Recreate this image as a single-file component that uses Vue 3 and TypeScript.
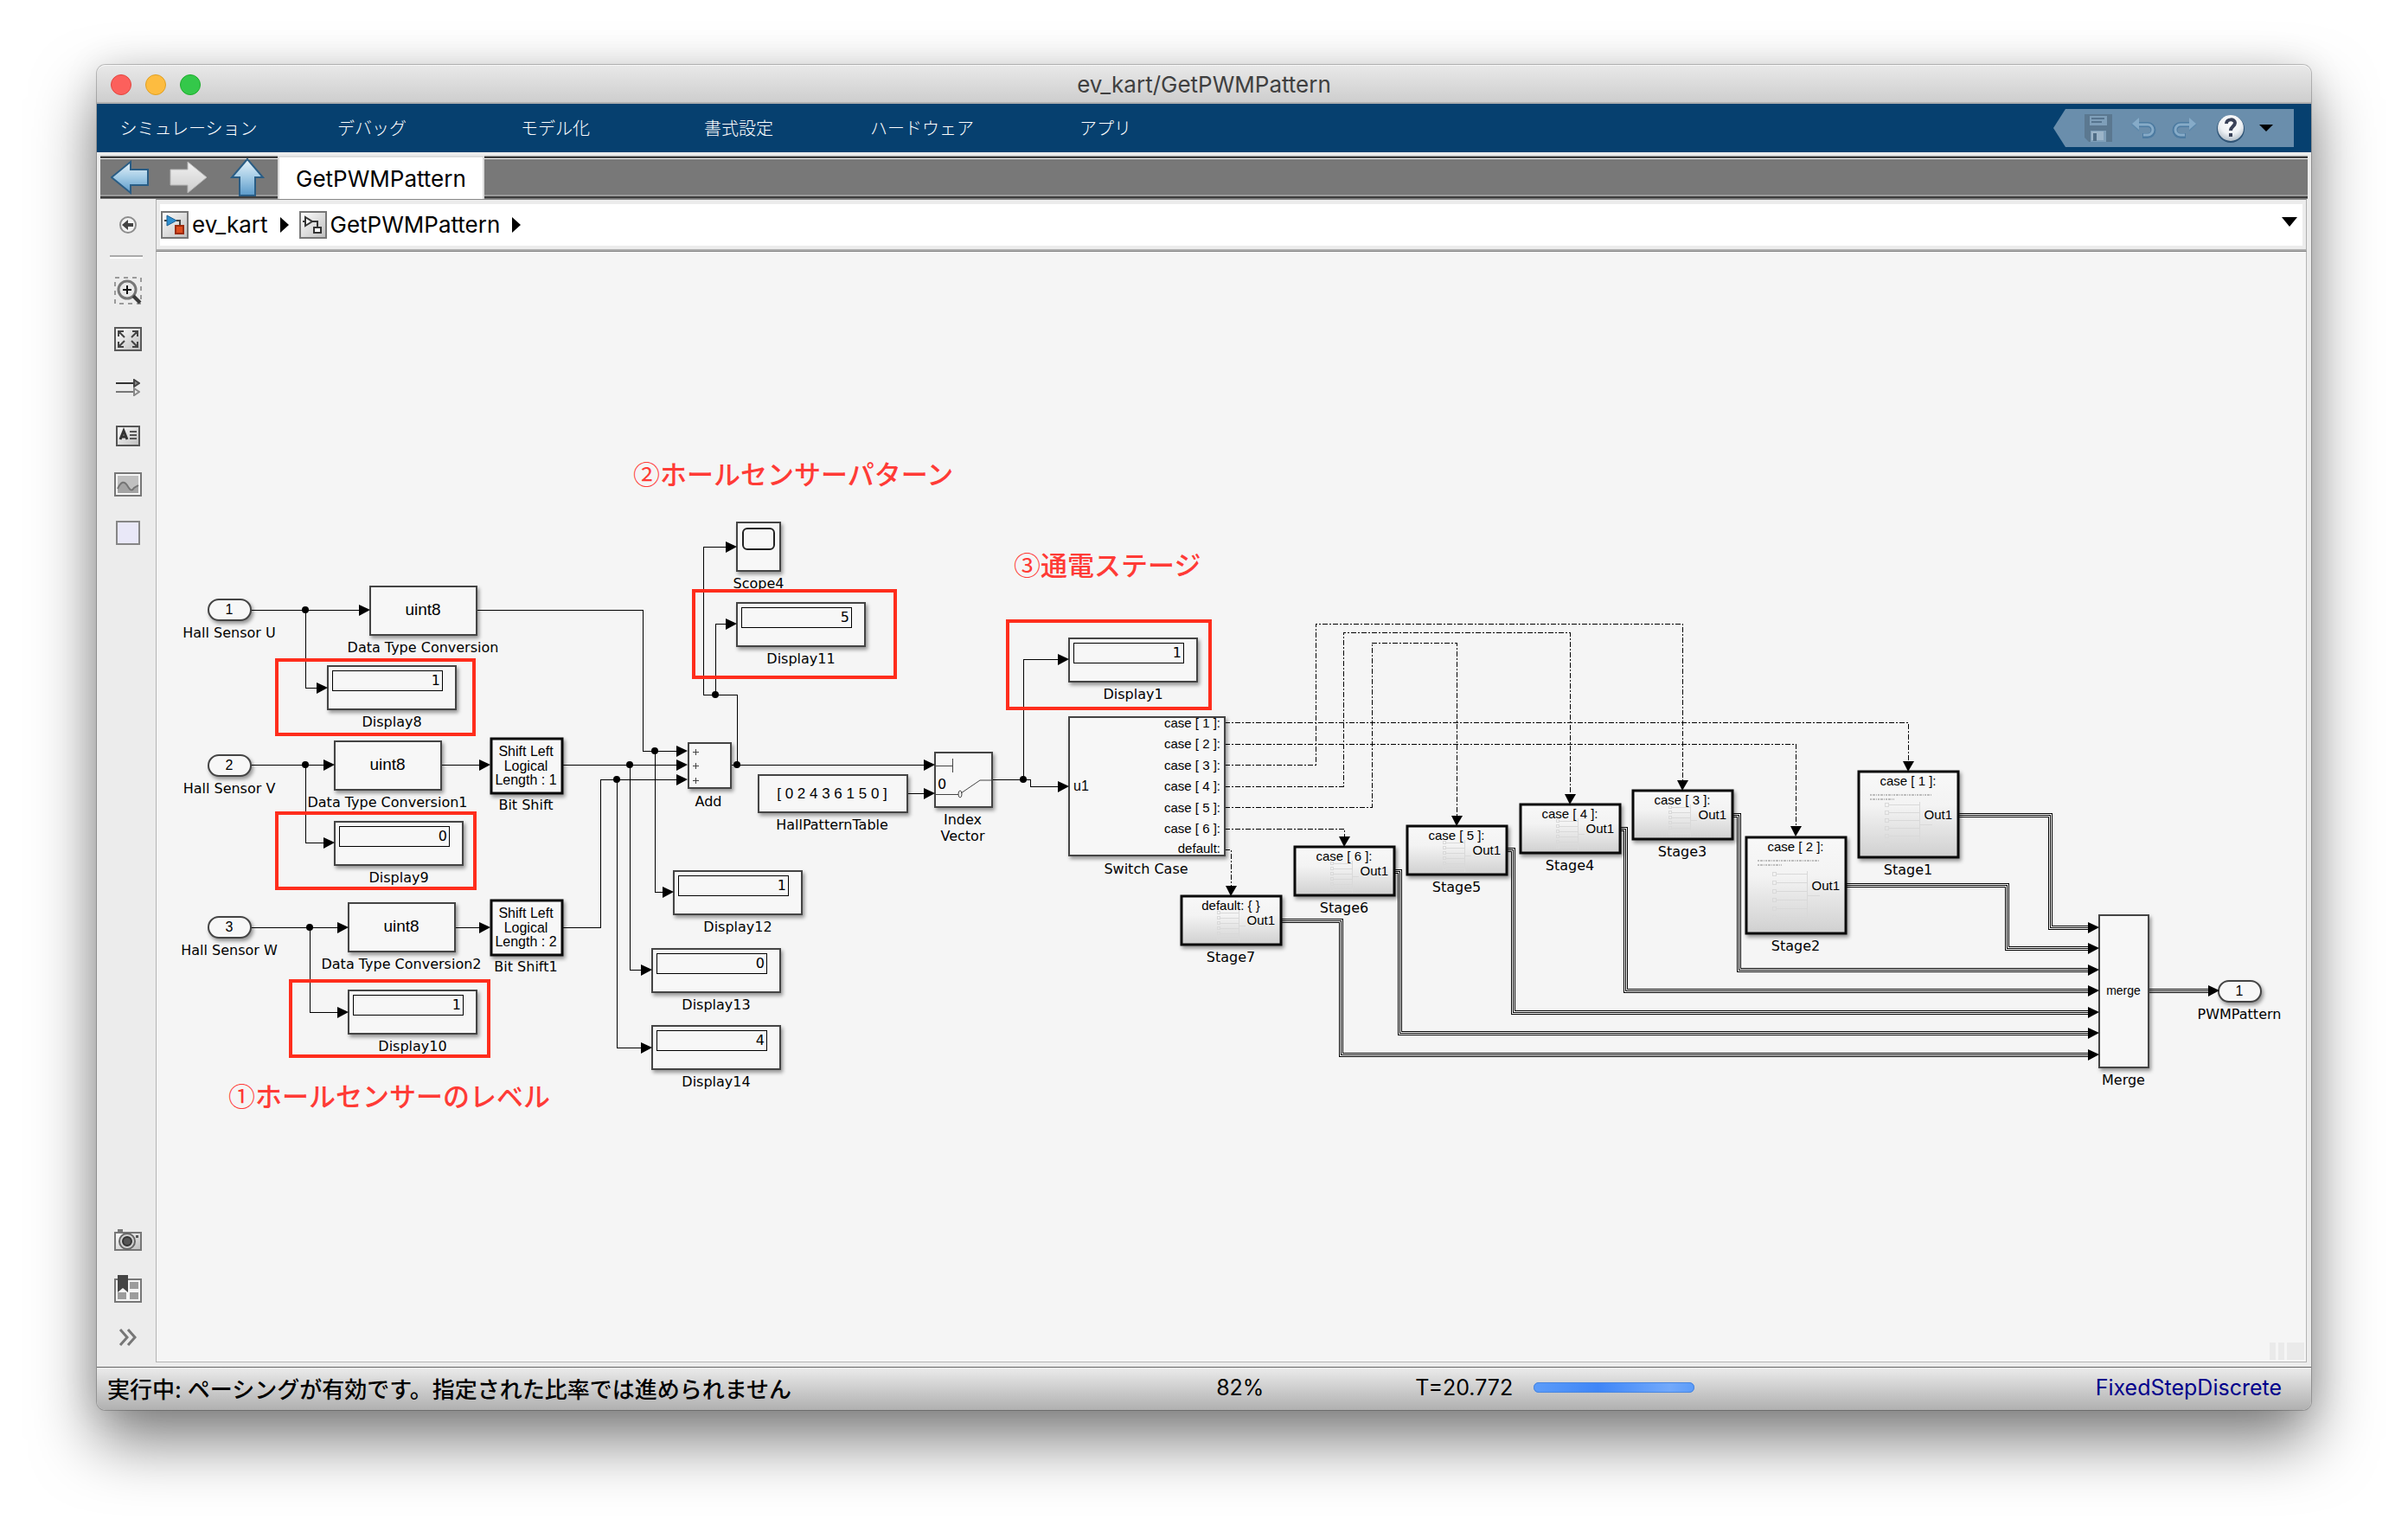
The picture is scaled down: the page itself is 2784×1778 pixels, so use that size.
<script setup lang="ts">
type Point = [number, number]

interface Wire {
  points: Point[]
  head?: 'right' | 'down'
}

interface Display {
  name: string
  value: string
  x: number
  y: number
}

interface Stage {
  name: string
  action: string
  x: number
  y: number
  height: number
  detailed: boolean
}

const menus: string[] = ['シミュレーション', 'デバッグ', 'モデル化', '書式設定', 'ハードウェア', 'アプリ']

const HEAD = 12

const signals: Wire[] = [
  { points: [[290, 705], [428, 705]], head: 'right' },
  { points: [[353, 705], [353, 795], [379, 795]], head: 'right' },
  { points: [[551, 705], [743, 705], [743, 868], [795, 868]], head: 'right' },
  { points: [[290, 884], [387, 884]], head: 'right' },
  { points: [[353, 884], [353, 974], [387, 974]], head: 'right' },
  { points: [[510, 884], [567, 884]], head: 'right' },
  { points: [[650, 884], [795, 884]], head: 'right' },
  { points: [[290, 1072], [403, 1072]], head: 'right' },
  { points: [[358, 1072], [358, 1170], [403, 1170]], head: 'right' },
  { points: [[527, 1072], [567, 1072]], head: 'right' },
  { points: [[650, 1072], [694, 1072], [694, 901], [795, 901]], head: 'right' },
  { points: [[757, 868], [757, 1031], [779, 1031]], head: 'right' },
  { points: [[728, 884], [728, 1121], [754, 1121]], head: 'right' },
  { points: [[713, 901], [713, 1211], [754, 1211]], head: 'right' },
  { points: [[845, 884], [1081, 884]], head: 'right' },
  { points: [[852, 884], [852, 803], [813, 803], [813, 632], [852, 632]], head: 'right' },
  { points: [[827, 803], [827, 721], [852, 721]], head: 'right' },
  { points: [[1049, 917], [1081, 917]], head: 'right' },
  { points: [[1147, 901], [1191, 901], [1191, 909], [1236, 909]], head: 'right' },
  { points: [[1183, 901], [1183, 762], [1236, 762]], head: 'right' },
]

const actions: Wire[] = [
  { points: [[1416, 835], [2206, 835], [2206, 892]], head: 'down' },
  { points: [[1416, 860], [2076, 860], [2076, 967]], head: 'down' },
  { points: [[1416, 884], [1521, 884], [1521, 721], [1945, 721], [1945, 914]], head: 'down' },
  { points: [[1416, 909], [1553, 909], [1553, 731], [1815, 731], [1815, 930]], head: 'down' },
  { points: [[1416, 933], [1586, 933], [1586, 743], [1684, 743], [1684, 955]], head: 'down' },
  { points: [[1416, 958], [1554, 958], [1554, 979]], head: 'down' },
  { points: [[1416, 982], [1423, 982], [1423, 1036]], head: 'down' },
]

const buses: Wire[] = [
  { points: [[2265, 942], [2370, 942], [2370, 1072], [2427, 1072]], head: 'right' },
  { points: [[2134, 1023], [2320, 1023], [2320, 1096], [2427, 1096]], head: 'right' },
  { points: [[2003, 942], [2010, 942], [2010, 1121], [2427, 1121]], head: 'right' },
  { points: [[1873, 958], [1879, 958], [1879, 1145], [2427, 1145]], head: 'right' },
  { points: [[1743, 982], [1749, 982], [1749, 1170], [2427, 1170]], head: 'right' },
  { points: [[1612, 1007], [1618, 1007], [1618, 1194], [2427, 1194]], head: 'right' },
  { points: [[1481, 1064], [1550, 1064], [1550, 1219], [2427, 1219]], head: 'right' },
  { points: [[2484, 1145], [2566, 1145]], head: 'right' },
]

const junctions: Point[] = [
  [353, 705], [353, 884], [358, 1072], [757, 868], [728, 884], [713, 901],
  [852, 884], [827, 803], [1183, 901],
]

const ports = [
  { name: 'Hall Sensor U', index: 1, x: 241, y: 705 },
  { name: 'Hall Sensor V', index: 2, x: 241, y: 885 },
  { name: 'Hall Sensor W', index: 3, x: 241, y: 1072 },
  { name: 'PWMPattern', index: 1, x: 2565, y: 1146 },
]

const conversions = [
  { name: 'Data Type Conversion', x: 428, y: 678 },
  { name: 'Data Type Conversion1', x: 387, y: 857 },
  { name: 'Data Type Conversion2', x: 403, y: 1044 },
]

const shifts = [
  { name: 'Bit Shift', length: 1, y: 854 },
  { name: 'Bit Shift1', length: 2, y: 1041 },
]

const displays: Display[] = [
  { name: 'Display8', value: '1', x: 379, y: 770 },
  { name: 'Display9', value: '0', x: 387, y: 950 },
  { name: 'Display10', value: '1', x: 403, y: 1145 },
  { name: 'Display11', value: '5', x: 852, y: 697 },
  { name: 'Display12', value: '1', x: 779, y: 1007 },
  { name: 'Display13', value: '0', x: 754, y: 1097 },
  { name: 'Display14', value: '4', x: 754, y: 1186 },
  { name: 'Display1', value: '1', x: 1236, y: 738 },
]

const cases = [
  { text: 'case [ 1 ]:', y: 841 },
  { text: 'case [ 2 ]:', y: 865 },
  { text: 'case [ 3 ]:', y: 890 },
  { text: 'case [ 4 ]:', y: 914 },
  { text: 'case [ 5 ]:', y: 939 },
  { text: 'case [ 6 ]:', y: 963 },
  { text: 'default:', y: 986 },
]

const stages: Stage[] = [
  { name: 'Stage1', action: 'case [ 1 ]:', x: 2149, y: 892, height: 99, detailed: true },
  { name: 'Stage2', action: 'case [ 2 ]:', x: 2019, y: 968, height: 111, detailed: true },
  { name: 'Stage3', action: 'case [ 3 ]:', x: 1888, y: 914, height: 56, detailed: false },
  { name: 'Stage4', action: 'case [ 4 ]:', x: 1758, y: 930, height: 56, detailed: false },
  { name: 'Stage5', action: 'case [ 5 ]:', x: 1627, y: 955, height: 56, detailed: false },
  { name: 'Stage6', action: 'case [ 6 ]:', x: 1497, y: 979, height: 56, detailed: false },
  { name: 'Stage7', action: 'default: { }', x: 1366, y: 1036, height: 56, detailed: false },
]

const highlights = [
  { x: 320, y: 763, width: 228, height: 86 },
  { x: 320, y: 940, width: 229, height: 87 },
  { x: 336, y: 1134, width: 229, height: 87 },
  { x: 802, y: 683, width: 233, height: 100 },
  { x: 1165, y: 718, width: 234, height: 101 },
]

const notes = [
  { mark: '①', text: 'ホールセンサーのレベル', x: 264, y: 1279 },
  { mark: '②', text: 'ホールセンサーパターン', x: 732, y: 560 },
  { mark: '③', text: '通電ステージ', x: 1172, y: 665 },
]

/** Path of a wire; it stops where its arrowhead begins. */
function wirePath(wire: Wire): string {
  const last = wire.points.length - 1
  return wire.points
    .map(([x, y], i) => {
      const px = i === last && wire.head === 'right' ? x - HEAD : x
      const py = i === last && wire.head === 'down' ? y - HEAD : y
      return `${i ? 'L' : 'M'}${px} ${py}`
    })
    .join('')
}

function headPoints(wire: Wire): string {
  const [x, y] = wire.points[wire.points.length - 1]
  return wire.head === 'down'
    ? `${x},${y} ${x - 6},${y - HEAD} ${x + 7},${y - HEAD}`
    : `${x},${y} ${x - HEAD - 1},${y - 6} ${x - HEAD - 1},${y + 7}`
}

const allWires: Wire[] = [...signals, ...actions, ...buses]

/** Faint preview of the subsystem's content, drawn in its own block. */
function previewPath(stage: Stage): string {
  const left = stage.detailed ? 34 : 44
  const right = stage.detailed ? 70 : 66
  const top = stage.detailed ? Math.round(stage.height * 0.38) : 19
  const step = stage.detailed ? Math.round(stage.height * 0.09) : 6
  const box = stage.detailed ? 4 : 3
  let d = ''
  for (let i = 0; i < 6; i++) {
    const y = top + i * step
    d += `M${left - box} ${y - 2}h${box}v${box}h-${box}zM${left} ${y}H${right}`
  }
  const mid = top + step * 2 + Math.round(step / 2)
  return `${d}M${right} ${top - 3}V${top + step * 5 + 4}M${right} ${mid}h${stage.detailed ? 15 : 8}`
}
</script>

<template>
  <div class="desktop">
    <div class="window">
      <header class="titlebar">
        <div class="lights">
          <button class="light close" aria-label="閉じる"></button>
          <button class="light minimize" aria-label="しまう"></button>
          <button class="light zoom" aria-label="拡大"></button>
        </div>
        <h1>ev_kart/GetPWMPattern</h1>
      </header>

      <nav class="menubar">
        <button v-for="menu in menus" :key="menu" class="menu">{{ menu }}</button>
        <div class="quick">
          <button class="save" aria-label="保存">
            <svg width="32" height="32" viewBox="0 0 32 32">
              <path d="M0 0h32v32H5l-5-5z" fill="#5b7890" />
              <path d="M6 2h20v11H6zM7 19h18v13H7z" fill="#7f9fb9" />
              <path d="M8 5h15M8 9h12" stroke="#56748e" stroke-width="2" />
              <path d="M8 20h14v10H8z" fill="#9cb4c8" />
              <path d="M10 22h4v9h-4z" fill="#506d86" />
            </svg>
          </button>
          <button aria-label="元に戻す">
            <svg width="32" height="32" viewBox="0 0 32 32" fill="none">
              <path d="M9 12h12a6 6 0 0 1 0 13h-6" stroke="#4d7ba1" stroke-width="6" />
              <path d="M2 12l9-8v16z" fill="#5c88ab" />
              <path d="M9 12h12a6 6 0 0 1 0 12h-5" stroke="#86abc8" stroke-width="3" />
              <path d="M3 11l8-7v14z" fill="#86abc8" />
            </svg>
          </button>
          <button aria-label="やり直し">
            <svg width="32" height="32" viewBox="0 0 32 32" fill="none">
              <path d="M23 12H11a6 6 0 0 0 0 13h6" stroke="#4d7ba1" stroke-width="6" />
              <path d="M30 12l-9-8v16z" fill="#5c88ab" />
              <path d="M23 12H11a6 6 0 0 0 0 12h5" stroke="#86abc8" stroke-width="3" />
              <path d="M29 11l-8-7v14z" fill="#86abc8" />
            </svg>
          </button>
          <button class="help" aria-label="ヘルプ">
            <svg width="34" height="34" viewBox="0 0 34 34" fill="none">
              <defs>
                <radialGradient id="helpFill" cx=".5" cy=".3" r=".7">
                  <stop offset="0" stop-color="#fff" />
                  <stop offset=".6" stop-color="#eef1f4" />
                  <stop offset="1" stop-color="#b4bfc9" />
                </radialGradient>
              </defs>
              <circle cx="17" cy="18" r="16" fill="#2f5476" />
              <circle cx="17" cy="17" r="15" fill="url(#helpFill)" />
              <path d="M12 12c0-6 10-6 10-1 0 4-5 4-5 9" stroke="#3a4258" stroke-width="4" />
              <path d="M15 23h4v4h-4z" fill="#3a4258" />
            </svg>
          </button>
          <button class="more" aria-label="その他">
            <svg width="16" height="8" viewBox="0 0 16 8"><path d="M0 0h16L8 8z" /></svg>
          </button>
        </div>
      </nav>

      <div class="tabstrip">
        <svg width="0" height="0" class="defs">
          <defs>
            <linearGradient id="arrowBlue" x1="0" y1="0" x2="0" y2="1">
              <stop offset="0" stop-color="#e9f4fb" />
              <stop offset=".5" stop-color="#a3cbe5" />
              <stop offset="1" stop-color="#5b9aca" />
            </linearGradient>
            <linearGradient id="arrowGray" x1="0" y1="0" x2="0" y2="1">
              <stop offset="0" stop-color="#f2f2f2" />
              <stop offset="1" stop-color="#cdcdcd" />
            </linearGradient>
            <linearGradient id="iconFill" x1="0" y1="0" x2="1" y2="1">
              <stop offset="0" stop-color="#fff" />
              <stop offset="1" stop-color="#bdbdbd" />
            </linearGradient>
          </defs>
        </svg>
        <button class="travel" aria-label="戻る">
          <svg width="44" height="44" viewBox="0 0 44 44">
            <path d="M1 22L23 4v9h20v18H23v9z" fill="url(#arrowBlue)" stroke="#2a5d85" stroke-width="2" />
          </svg>
        </button>
        <button class="travel" aria-label="進む">
          <svg width="44" height="44" viewBox="0 0 44 44">
            <path d="M43 22L21 4v9H1v18h20v9z" fill="url(#arrowGray)" stroke="#b5b5b5" />
          </svg>
        </button>
        <button class="travel" aria-label="上の階層">
          <svg width="44" height="44" viewBox="0 0 44 44">
            <path d="M22 1L4 22h9v21h18V22h9z" fill="url(#arrowBlue)" stroke="#2a5d85" stroke-width="2" />
          </svg>
        </button>
        <button class="tab">GetPWMPattern</button>
      </div>

      <div class="workspace">
        <aside class="palette">
          <div class="tools">
            <button class="tool" aria-label="パレットを隠す">
              <svg width="22" height="22" viewBox="0 0 22 22" fill="none">
                <circle cx="11" cy="11" r="9" fill="#f4f4f4" stroke="#8c8c8c" stroke-width="2" />
                <path d="M4 11l7-6v4h6v4h-6v4z" fill="#444" />
              </svg>
            </button>
            <hr />
            <button class="tool" aria-label="ズーム">
              <svg width="32" height="32" viewBox="0 0 32 32" fill="none">
                <path d="M1 1h30v30H1z" stroke="#9a9a9a" stroke-width="2" stroke-dasharray="5 5" />
                <circle cx="15" cy="15" r="10" fill="#e8e8e8" stroke="#777" stroke-width="3" />
                <path d="M15 10v10M10 15h10" stroke="#111" stroke-width="2" />
                <path d="M22 22l8 8" stroke="#3a3a3a" stroke-width="4" />
              </svg>
            </button>
            <button class="tool" aria-label="全体表示">
              <svg width="32" height="28" viewBox="0 0 32 28" fill="none">
                <path d="M1 1h30v26H1z" fill="url(#iconFill)" stroke="#5a5a5a" stroke-width="2" />
                <path d="M5 11V5h6M5 5l7 7M27 11V5h-6M27 5l-7 7M5 17v6h6M5 23l7-7M27 17v6h-6M27 23l-7-7" stroke="#444" stroke-width="2" />
              </svg>
            </button>
            <button class="tool" aria-label="サンプル時間">
              <svg width="28" height="20" viewBox="0 0 28 20" fill="none">
                <path d="M0 5h21" stroke="#333" stroke-width="2" />
                <path d="M21 1l6 4-6 4z" fill="#888" stroke="#444" stroke-width="2" />
                <path d="M0 15h21" stroke="#777" stroke-width="2" />
                <path d="M21 11l6 4-6 4z" fill="#eee" stroke="#888" stroke-width="2" />
              </svg>
            </button>
            <button class="tool" aria-label="注釈">
              <svg width="28" height="24" viewBox="0 0 28 24" fill="none">
                <path d="M1 1h26v22H1z" fill="url(#iconFill)" stroke="#555" stroke-width="2" />
                <path d="M5 16l4-10 4 10M6 13h6" stroke="#333" stroke-width="3" />
                <path d="M16 7h8M16 11h8M16 15h8" stroke="#555" stroke-width="2" />
              </svg>
            </button>
            <button class="tool" aria-label="イメージ">
              <svg width="32" height="28" viewBox="0 0 32 28" fill="none">
                <path d="M1 1h30v26H1z" fill="#f6f6f6" stroke="#777" stroke-width="2" />
                <path d="M4 4h24v20H4z" fill="#c0c0c0" />
                <path d="M4 24v-5c4-9 8-9 11-4s5 8 8 3l5-3v9z" fill="#a4a4a4" />
                <path d="M4 19c4-9 8-9 11-4s5 8 8 3l5-3" stroke="#747474" stroke-width="2" />
              </svg>
            </button>
            <button class="tool" aria-label="領域">
              <svg width="28" height="28" viewBox="0 0 28 28">
                <path d="M1 1h26v26H1z" fill="#e9e8f8" stroke="#868686" stroke-width="2" />
              </svg>
            </button>
          </div>
          <div class="tools">
            <button class="tool" aria-label="スクリーンショット">
              <svg width="32" height="26" viewBox="0 0 32 26" fill="none">
                <path d="M4 0h6v4H4z" fill="#777" />
                <path d="M1 4h30v20H1z" fill="url(#iconFill)" stroke="#777" stroke-width="2" />
                <circle cx="15" cy="14" r="9" fill="#d0d0d0" stroke="#666" stroke-width="2" />
                <circle cx="15" cy="14" r="5" fill="#555" stroke="#333" stroke-width="2" />
                <path d="M25 7h3v3h-3z" fill="#555" />
              </svg>
            </button>
            <button class="tool" aria-label="モデルブラウザー">
              <svg width="32" height="32" viewBox="0 0 32 32" fill="none">
                <path d="M1 5h30v26H1z" fill="#f4f4f4" stroke="#777" stroke-width="2" />
                <path d="M18 8h10v8H18zM18 20h10v8H18zM4 20h10v8H4z" fill="#9c9c9c" />
                <path d="M4 0h12v20l-6-5-6 5z" fill="#444" />
              </svg>
            </button>
            <button class="tool" aria-label="展開">
              <svg width="22" height="20" viewBox="0 0 22 20" fill="none">
                <path d="M2 1l8 9-8 9M11 1l8 9-8 9" stroke="#777" stroke-width="3" />
              </svg>
            </button>
          </div>
        </aside>

        <main>
          <nav class="path">
            <button class="crumb">
              <svg width="32" height="32" viewBox="0 0 32 32" fill="none">
                <path d="M1 1h30v30H1z" fill="url(#iconFill)" stroke="#777" stroke-width="2" />
                <path d="M4 11h3M18 11h4v6" stroke="#444" stroke-width="2" />
                <path d="M7 5l11 6-11 6z" fill="#2e8fcf" stroke="#1c5f91" />
                <path d="M17 17h9v9h-9z" fill="#dd4d1f" stroke="#9c2c0c" stroke-width="2" />
              </svg>
              ev_kart
            </button>
            <svg class="next" width="10" height="18" viewBox="0 0 10 18"><path d="M0 0l10 9-10 9z" /></svg>
            <button class="crumb">
              <svg width="32" height="32" viewBox="0 0 32 32" fill="none">
                <path d="M1 1h30v30H1z" fill="url(#iconFill)" stroke="#777" stroke-width="2" />
                <path d="M4 12h3M15 12h6v6" stroke="#333" stroke-width="2" />
                <path d="M7 7l8 5-8 5z" fill="#fff" stroke="#333" stroke-width="2" />
                <path d="M17 19h8v6h-8z" fill="#fff" stroke="#333" stroke-width="2" />
              </svg>
              GetPWMPattern
            </button>
            <svg class="next" width="10" height="18" viewBox="0 0 10 18"><path d="M0 0l10 9-10 9z" /></svg>
            <button class="history" aria-label="履歴">
              <svg width="18" height="11" viewBox="0 0 18 11"><path d="M0 0h18L9 11z" /></svg>
            </button>
          </nav>

          <div class="canvas">
            <svg class="model" viewBox="181 291 2485 1283">
              <defs>
                <linearGradient id="stageFill" x1="0" y1="0" x2="0" y2="1">
                  <stop offset="0" stop-color="#f8f8f8" />
                  <stop offset=".4" stop-color="#f3f3f3" />
                  <stop offset="1" stop-color="#d0d0d0" />
                </linearGradient>
              </defs>

              <g class="wires">
                <path v-for="(wire, i) in signals" :key="`s${i}`" :d="wirePath(wire)" class="signal" />
                <path v-for="(wire, i) in actions" :key="`a${i}`" :d="wirePath(wire)" class="signal action" />
                <g v-for="(wire, i) in buses" :key="`b${i}`">
                  <path :d="wirePath(wire)" class="bus-outer" />
                  <path :d="wirePath(wire)" class="bus-gap" />
                  <path :d="wirePath(wire)" class="signal" />
                </g>
              </g>
              <circle v-for="([x, y], i) in junctions" :key="`j${i}`" :cx="x" :cy="y" r="4" />

              <g v-for="port in ports" :key="port.name">
                <rect class="block" :x="port.x" :y="port.y - 12" width="49" height="24" rx="12" />
                <text class="inner" :x="port.x + 24" :y="port.y + 5">{{ port.index }}</text>
                <text class="label" :x="port.x + 24" :y="port.y + 32">{{ port.name }}</text>
              </g>

              <g v-for="block in conversions" :key="block.name">
                <rect class="block" :x="block.x" :y="block.y" width="123" height="56" />
                <text class="inner large" :x="block.x + 61" :y="block.y + 33">uint8</text>
                <text class="label" :x="block.x + 61" :y="block.y + 76">{{ block.name }}</text>
              </g>

              <g v-for="shift in shifts" :key="shift.name">
                <rect class="block thick" x="568" :y="shift.y" width="82" height="63" />
                <text class="inner" x="608" :y="shift.y + 20">Shift Left</text>
                <text class="inner" x="608" :y="shift.y + 37">Logical</text>
                <text class="inner" x="608" :y="shift.y + 53">Length : {{ shift.length }}</text>
                <text class="label" x="608" :y="shift.y + 82">{{ shift.name }}</text>
              </g>

              <g v-for="display in displays" :key="display.name">
                <rect class="block" :x="display.x" :y="display.y" width="148" height="50" />
                <rect class="field" :x="display.x + 5" :y="display.y + 5" width="127" height="23" />
                <text class="label end" :x="display.x + 130" :y="display.y + 22">{{ display.value }}</text>
                <text class="label" :x="display.x + 74" :y="display.y + 70">{{ display.name }}</text>
              </g>

              <g>
                <rect class="block" x="852" y="604" width="50" height="56" />
                <rect class="screen" x="859" y="611" width="36" height="24" rx="5" />
                <text class="label" x="877" y="680">Scope4</text>
              </g>

              <g>
                <rect class="block" x="796" y="859" width="49" height="52" />
                <path class="sketch" d="M801 869h7M804 866v7M801 885h7M804 882v7M801 902h7M804 899v7" />
                <text class="label" x="819" y="932">Add</text>
              </g>

              <g>
                <rect class="block" x="877" y="896" width="172" height="43" />
                <text class="inner table" x="962" y="923">[ 0 2 4 3 6 1 5 0 ]</text>
                <text class="label" x="962" y="959">HallPatternTable</text>
              </g>

              <g>
                <rect class="block" x="1081" y="870" width="66" height="63" />
                <path class="sketch" d="M1082 885h19M1101 877v16M1082 918h26" />
                <path class="sketch smooth" d="M1111 917l22-15h13" />
                <ellipse class="sketch smooth" cx="1110" cy="918" rx="2" ry="4" />
                <text class="label" x="1089" y="912">0</text>
                <text class="label" x="1113" y="953">Index</text>
                <text class="label" x="1113" y="972">Vector</text>
              </g>

              <g>
                <rect class="block" x="1236" y="829" width="180" height="160" />
                <text class="inner start" x="1241" y="914">u1</text>
                <text v-for="item in cases" :key="item.text" class="inner small end" x="1411" :y="item.y">{{ item.text }}</text>
                <text class="label" x="1325" y="1010">Switch Case</text>
              </g>

              <g v-for="stage in stages" :key="stage.name">
                <rect class="block thick stage" :x="stage.x" :y="stage.y" width="115" :height="stage.height" />
                <path class="preview" :transform="`translate(${stage.x} ${stage.y})`" :d="previewPath(stage)" />
                <g v-if="stage.detailed" class="remark" :transform="`translate(${stage.x} ${stage.y})`">
                  <path d="M13 27h71" />
                  <path d="M13 32h28" />
                </g>
                <text class="inner small" :x="stage.x + 57" :y="stage.y + 16">{{ stage.action }}</text>
                <text class="inner small end" :x="stage.x + 108" :y="stage.y + Math.round(stage.height / 2) + 5">Out1</text>
                <text class="label" :x="stage.x + 57" :y="stage.y + stage.height + 20">{{ stage.name }}</text>
              </g>

              <g>
                <rect class="block" x="2427" y="1058" width="57" height="176" />
                <text class="inner tiny" x="2455" y="1150">merge</text>
                <text class="label" x="2455" y="1254">Merge</text>
              </g>

              <polygon v-for="(wire, i) in allWires" :key="`h${i}`" :points="headPoints(wire)" />

              <rect v-for="(box, i) in highlights" :key="`m${i}`" class="highlight" v-bind="box" />
              <text v-for="note in notes" :key="note.mark" class="note" :x="note.x" :y="note.y"><tspan class="mark">{{ note.mark }}</tspan>{{ note.text }}</text>

              <path class="corner" d="M2624 1552h7v20h-7zM2634 1552h7v20h-7zM2644 1552h20v20h-20z" />
            </svg>
          </div>
        </main>
      </div>

      <footer class="status">
        <span class="message">実行中: ペーシングが有効です。指定された比率では進められません</span>
        <span>82%</span>
        <label class="time">T=20.772<progress value="1" max="1"></progress></label>
        <a class="solver" href="#">FixedStepDiscrete</a>
      </footer>
    </div>
  </div>
</template>

<style>
body {
  margin: 0;
  background: #fff;
}
</style>

<style scoped>
.desktop {
  padding: 75px 112px 148px;
  overflow: hidden;
  font-family: Inter, "Noto Sans CJK JP", sans-serif;
  font-size: 26px;
  color: #000;
}

button {
  display: flex;
  align-items: center;
  justify-content: center;
  padding: 0;
  border: 0;
  background: none;
  color: inherit;
  font: inherit;
}

svg {
  display: block;
  flex: none;
}

.window {
  background: #ececec;
  border-radius: 10px;
  box-shadow: 0 0 0 1px rgba(0, 0, 0, 0.22), 0 36px 72px rgba(0, 0, 0, 0.5), 0 0 40px rgba(0, 0, 0, 0.1);
}

.titlebar {
  display: grid;
  grid-template-columns: 1fr auto 1fr;
  align-items: center;
  height: 45px;
  box-sizing: border-box;
  padding: 2px 16px 0;
  border-top: 1px solid #f6f6f6;
  border-bottom: 2px solid #b0b0b0;
  border-radius: 10px 10px 0 0;
  background: linear-gradient(#e8e8e8, #cecece);
}

.lights {
  display: flex;
  gap: 16px;
}

.light {
  width: 24px;
  height: 24px;
  box-sizing: border-box;
  border: 1px solid #e2463f;
  border-radius: 50%;
  background: #fc605c;
}

.minimize {
  border-color: #dfa023;
  background: #fdbc40;
}

.zoom {
  border-color: #1dad2b;
  background: #34c84a;
}

h1 {
  margin: 0;
  color: #404040;
  font-size: 26px;
  font-weight: 400;
  line-height: 32px;
}

.menubar {
  display: flex;
  align-items: center;
  height: 56px;
  padding-right: 20px;
  background: #06406f;
}

.menu {
  width: 212px;
  height: 56px;
  padding-bottom: 2px;
  color: #fff;
  font-family: "Noto Sans CJK JP", sans-serif;
  font-size: 20px;
  font-weight: 300;
}

.quick {
  display: flex;
  align-items: center;
  gap: 16px;
  height: 44px;
  margin-left: auto;
  padding: 0 24px 0 36px;
  background: #6a8eac;
  clip-path: polygon(0 50%, 14px 0, 100% 0, 100% 100%, 14px 100%);
}

.save {
  margin-right: 4px;
}

.help {
  margin-left: 4px;
}

.tabstrip {
  display: flex;
  height: 50px;
  box-sizing: border-box;
  margin: 4px 4px 0;
  padding-left: 12px;
  background: linear-gradient(#999 0 1px, #3c3c3c 1px 3px, #fff 3px 4px, #787878 4px 45px, #999 45px 47px, #3c3c3c 47px 49px, #787878 49px);
}

.defs {
  position: absolute;
}

.travel {
  margin-right: 24px;
}

.travel:nth-of-type(3) {
  margin-right: 13px;
}

.tab {
  box-sizing: border-box;
  padding: 0 19px;
  border: 2px solid #dcdcdc;
  border-bottom: 0;
  background: #fff;
}

.workspace {
  display: flex;
  padding-right: 5px;
}

.palette {
  display: flex;
  flex-direction: column;
  justify-content: space-between;
  width: 68px;
  flex: none;
  padding: 2px 0 6px;
  box-sizing: border-box;
}

.tools {
  display: flex;
  flex-direction: column;
}

.tool {
  width: 72px;
  height: 56px;
}

hr {
  width: 38px;
  height: 2px;
  margin: 7px 0 9px 15px;
  border: 0;
  border-bottom: 2px solid #fff;
  background: #aaa;
}

main {
  flex: 1;
  min-width: 0;
}

.path {
  display: flex;
  align-items: center;
  height: 60px;
  box-sizing: border-box;
  padding: 0 6px 0 1px;
  border: 1px solid #b0b0b0;
  border-top-color: #888;
  border-bottom-width: 2px;
  background: linear-gradient(#fff, #fff) 4px 5px / calc(100% - 8px) 48px no-repeat #ececec;
}

.crumb {
  gap: 4px;
  margin-left: 4px;
}

.next {
  margin: 0 8px 0 14px;
}

.history {
  margin: 0 4px 6px auto;
}

.canvas {
  border: 1px solid #b4b4b4;
  border-top-color: #808080;
  margin-bottom: 5px;
  background: #f5f5f5;
}

.model {
  width: 100%;
  height: auto;
}

.wires path {
  fill: none;
  shape-rendering: crispEdges;
}

.signal {
  stroke: #000;
}

.action {
  stroke-dasharray: 6 2 2 2;
}

.bus-outer {
  stroke: #000;
  stroke-width: 5;
}

.bus-gap {
  stroke: #fff;
  stroke-width: 3;
}

.block {
  fill: #f7f7f7;
  stroke: #444;
  stroke-width: 2;
  filter: drop-shadow(2px 3px 2px rgba(0, 0, 0, 0.4));
}

.thick {
  stroke: #0a0a0a;
  stroke-width: 3;
}

.stage {
  fill: url(#stageFill);
}

.field {
  fill: none;
  stroke: #000;
  shape-rendering: crispEdges;
}

.screen {
  fill: none;
  stroke: #222;
  stroke-width: 2;
}

.sketch {
  fill: none;
  stroke: #444;
  shape-rendering: crispEdges;
}

.smooth {
  shape-rendering: auto;
}

.preview {
  fill: none;
  stroke: #d9d9d9;
  shape-rendering: crispEdges;
}

.remark path {
  stroke: #bdbdbd;
  stroke-width: 2;
  stroke-dasharray: 2 1 3 1 1 1;
}

.label {
  font-family: "DejaVu Sans", sans-serif;
  font-size: 16px;
  text-anchor: middle;
}

.inner {
  font-family: "Liberation Sans", sans-serif;
  font-size: 16px;
  text-anchor: middle;
}

.large {
  font-size: 19px;
}

.table {
  font-size: 17px;
}

.small {
  font-size: 15px;
}

.tiny {
  font-size: 14px;
}

.start {
  text-anchor: start;
}

.end {
  text-anchor: end;
}

.highlight {
  fill: none;
  stroke: #ff2d1c;
  stroke-width: 4;
}

.note {
  fill: #ff3b36;
  font-family: "Noto Sans CJK JP", sans-serif;
  font-size: 31px;
  font-weight: 500;
}

.mark {
  font-weight: 400;
}

.corner {
  fill: #eaeaea;
}

.status {
  display: grid;
  grid-template-columns: 51% 230px 1fr auto;
  align-items: center;
  height: 50px;
  box-sizing: border-box;
  padding: 0 34px 3px 12px;
  border-top: 1px solid #666;
  border-radius: 0 0 10px 10px;
  background: linear-gradient(#ebebeb, #b0b0b0);
  font-size: 25px;
}

.message {
  font-size: 26px;
  font-weight: 500;
}

.time {
  display: flex;
  align-items: center;
  gap: 24px;
}

progress {
  width: 186px;
  height: 12px;
  appearance: none;
  border: 0;
}

progress::-webkit-progress-bar {
  border-radius: 6px;
  background: #4a8ff5;
}

progress::-webkit-progress-value {
  box-sizing: border-box;
  border: 1px solid #4a86de;
  border-radius: 6px;
  background: linear-gradient(90deg, #5c9cf9, #3f86f7 40%, #72a9fb 85%, #5c9cf9);
}

.solver {
  color: #00008b;
  text-decoration: none;
}
</style>
